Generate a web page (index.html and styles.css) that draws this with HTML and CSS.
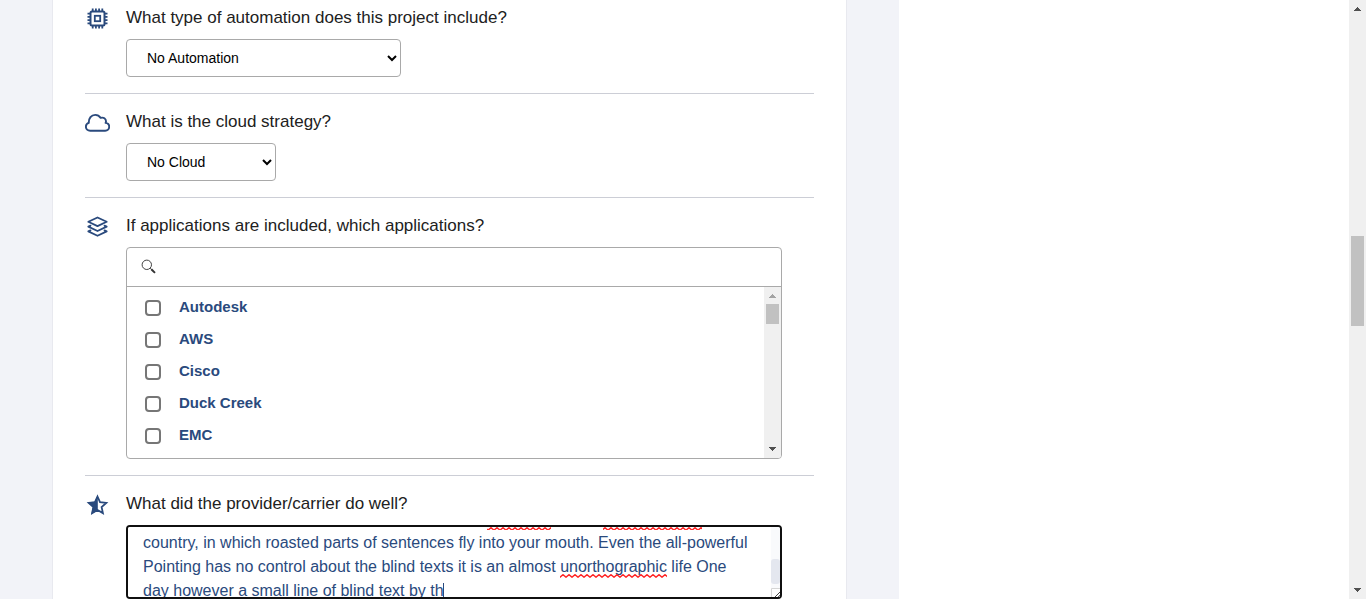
FILE: index.html
```html
<!DOCTYPE html>
<html lang="en">
<head>
<meta charset="utf-8">
<meta name="viewport" content="width=device-width, initial-scale=1">
<title>Project review</title>
<link rel="stylesheet" href="styles.css">
</head>
<body>
<main class="page">
  <div class="panel">
    <form class="card">
      <section class="question question-first">
        <svg class="icon" viewBox="0 0 25 24" aria-hidden="true">
          <g fill="none" stroke="currentColor" stroke-width="2">
            <rect x="5.500" y="5.500" width="14" height="14" rx="1.500"/>
            <rect x="9.800" y="9.800" width="5.400" height="5.400" stroke-width="1.800"/>
            <path stroke-width="1.800" d="M7.700 2.500v3M10.900 2.500v3M14.100 2.500v3M17.300 2.500v3M7.700 19.500v3M10.900 19.500v3M14.100 19.500v3M17.300 19.500v3M2.500 7.700h3M2.500 10.900h3M2.500 14.100h3M2.500 17.300h3M19.500 7.700h3M19.500 10.900h3M19.500 14.100h3M19.500 17.300h3"/>
          </g>
        </svg>
        <div class="body">
          <label class="title" for="automation">What type of automation does this project include?</label>
          <select class="select select-wide" id="automation"><option>No Automation</option></select>
        </div>
      </section>

      <section class="question">
        <svg class="icon" viewBox="0 0 25 24" aria-hidden="true">
          <path fill="none" stroke="currentColor" stroke-width="1.900" stroke-linejoin="round" d="M5.200 20.700C2.700 20.700.9 19 .9 16.700c0-1.900 1.200-3.300 2.900-3.800C3.600 8.200 6.300 4.900 10.200 4.900c2.500 0 4.300 1.200 5.500 3 2.800-1 5.400.8 5.300 3.600-.1.600-.2 1-.4 1.400 2.200.3 3.600 1.900 3.600 3.900 0 2.200-1.700 3.900-4 3.900z"/>
        </svg>
        <div class="body">
          <label class="title" for="cloud">What is the cloud strategy?</label>
          <select class="select select-narrow" id="cloud"><option>No Cloud</option></select>
        </div>
      </section>

      <section class="question">
        <svg class="icon" viewBox="0 0 25 24" aria-hidden="true">
          <g fill="none" stroke="currentColor" stroke-width="1.800" stroke-linejoin="round" stroke-linecap="round">
            <path d="M12.500 3.500l9.200 4.300-9.200 4.300-9.200-4.300z"/>
            <path d="M5.500 11.600l-2.200 1 9.200 4.400 9.200-4.400-2.200-1"/>
            <path d="M5.500 16.400l-2.200 1 9.200 4.400 9.200-4.400-2.200-1"/>
          </g>
        </svg>
        <div class="body">
          <label class="title" for="search">If applications are included, which applications?</label>
          <div class="picker">
            <div class="search">
              <svg class="glass" viewBox="0 0 16 16" aria-hidden="true">
                <circle cx="5.800" cy="5.800" r="4.700" fill="none" stroke="#444" stroke-width="1"/>
                <path d="M9.200 9.200l1.500 1.400" stroke="#444" stroke-width="1"/>
                <path d="M10.300 10.300l3.700 3.600" stroke="#333" stroke-width="2"/>
              </svg>
              <input class="search-input" id="search" type="text">
            </div>
            <div class="list">
              <div class="options">
                <label class="option"><input class="check" type="checkbox">Autodesk</label>
                <label class="option"><input class="check" type="checkbox">AWS</label>
                <label class="option"><input class="check" type="checkbox">Cisco</label>
                <label class="option"><input class="check" type="checkbox">Duck Creek</label>
                <label class="option"><input class="check" type="checkbox">EMC</label>
              </div>
              <div class="bar" aria-hidden="true">
                <svg class="arrow arrow-off" viewBox="0 0 17 17"><path d="M5 11h7v-1h-1V9h-1V8H9V7H8v1H7v1H6v1H5z"/></svg>
                <div class="track"><div class="thumb thumb-list"></div></div>
                <svg class="arrow" viewBox="0 0 17 17"><path d="M5 6h7v1h-1v1h-1v1H9v1H8V9H7V8H6V7H5z"/></svg>
              </div>
            </div>
          </div>
        </div>
      </section>

      <section class="question question-last">
        <svg class="icon" viewBox="0 0 25 24" aria-hidden="true">
          <path fill="none" stroke="currentColor" stroke-width="1.800" stroke-linejoin="miter" d="M12.500 4.500l2.500 5.600 6.300.7-4.700 4.200 1.300 6.100-5.400-3.100-5.400 3.100 1.300-6.100-4.700-4.200 6.300-.7z"/>
          <path fill="currentColor" d="M12.800 3v15.500l-6.400 3.500 1.400-6.900-5-4.600 6.700-.8z"/>
        </svg>
        <div class="body">
          <label class="title" for="review">What did the provider/carrier do well?</label>
          <div class="editor">
            <textarea class="text" id="review" rows="3" spellcheck="false">country, in which roasted parts of sentences fly into your mouth. Even the all-powerful Pointing has no control about the blind texts it is an almost unorthographic life One day however a small line of blind text by th</textarea>
            <svg class="marks" aria-hidden="true">
              <defs>
                <pattern id="wave" width="6" height="4" patternUnits="userSpaceOnUse">
                  <path d="M-1 4L0 3.200 3 .7 6 3.200 7 4" fill="none" stroke="#f22" stroke-width="1.400"/>
                </pattern>
              </defs>
              <rect x="359" width="64" height="3" fill="url(#wave)"/>
              <rect x="475" width="99" height="3" fill="url(#wave)"/>
              <g transform="translate(432 47)"><rect width="107" height="4" fill="url(#wave)"/></g>
              <rect x="315" y="56" width="1" height="16" fill="#2a4a7d"/>
            </svg>
            <div class="side" aria-hidden="true">
              <div class="side-track"><div class="side-thumb"></div></div>
              <svg class="grip" viewBox="0 0 9 9"><path d="M.5 9V.5H9" fill="none" stroke="#d5d5d5"/><path d="M4 9l5-5M7 9l2-2" stroke="#444" fill="none"/></svg>
            </div>
          </div>
        </div>
      </section>
    </form>
  </div>
  <aside class="aside"></aside>
</main>
<div class="bar" aria-hidden="true">
  <svg class="arrow" viewBox="0 0 17 17"><path d="M5 11h7v-1h-1V9h-1V8H9V7H8v1H7v1H6v1H5z"/></svg>
  <div class="track track-page"><div class="thumb thumb-page"></div></div>
  <svg class="arrow" viewBox="0 0 17 17"><path d="M5 6h7v1h-1v1h-1v1H9v1H8V9H7V8H6V7H5z"/></svg>
</div>
</body>
</html>
```
FILE: styles.css
```css
* { box-sizing: border-box; }

body {
  margin: 0;
  height: 100vh;
  display: flex;
  overflow: hidden;
  background: #fff;
  color: #212121;
  font-family: "Liberation Sans", Arial, sans-serif;
  font-size: 16px;
}

.page {
  flex: 1;
  min-width: 0;
  display: grid;
  grid-template-columns: minmax(0, 2fr) minmax(0, 1fr);
}
.panel { padding: 0 52px; background: #f2f3f8; }
.aside { background: #fff; }

.card {
  min-height: 100%;
  padding: 0 32px;
  background: #fff;
  border: solid #e8e9ef;
  border-width: 0 1px;
}

.question {
  display: flex;
  gap: 16px;
  padding: 16px 0;
  border-bottom: 1px solid #ccced6;
}
.question-first { padding-top: 6px; }
.question-last { border-bottom: 0; }

.icon { flex: none; width: 25px; height: 24px; color: #2a4a7d; }
.body {
  flex: 1;
  min-width: 0;
  padding-right: 32px;
  display: flex;
  flex-direction: column;
  align-items: flex-start;
  gap: 9px;
}
.title { font-size: 17px; line-height: 24px; }

.select {
  height: 38px;
  padding: 0 1px 0 16px;
  border: 1px solid #a9a9a9;
  border-radius: 4px;
  background: #fff;
  color: #000;
  font-family: inherit;
  font-size: 14px;
}
.select-wide { width: 275px; }
.select-narrow { width: 150px; }

.picker {
  width: 100%;
  border: 1px solid #a9a9a9;
  border-radius: 4px;
  overflow: hidden;
}
.search {
  display: flex;
  align-items: center;
  gap: 8px;
  height: 39px;
  padding: 0 14px;
  border-bottom: 1px solid #a9a9a9;
}
.glass { width: 16px; height: 16px; }
.search-input {
  flex: 1;
  height: 32px;
  padding: 0;
  border: 0;
  outline: 0;
  font-family: inherit;
  font-size: 14px;
}
.list { display: flex; height: 171px; }
.options { flex: 1; padding: 3px 18px; overflow: hidden; }
.option {
  display: flex;
  align-items: center;
  gap: 18px;
  height: 32px;
  color: #2a4a7d;
  font-size: 15px;
  font-weight: bold;
}
.check {
  appearance: none;
  width: 16px;
  height: 16px;
  margin: 4px 0 0;
  border: 2px solid #767676;
  border-radius: 4px;
  background: #fff;
}

.bar {
  flex: none;
  width: 17px;
  display: flex;
  flex-direction: column;
  background: #f0f0f0;
}
.arrow { flex: none; width: 17px; height: 17px; fill: #505050; shape-rendering: crispEdges; }
.arrow-off { fill: #a3a3a3; }
.track { flex: 1; padding: 0 2px; }
.track-page { padding-top: 219px; }
.thumb { background: #c1c1c1; }
.thumb-list { height: 20px; }
.thumb-page { height: 90px; }

.editor {
  position: relative;
  width: 100%;
  display: flex;
  height: 74px;
  border: 2px solid #101010;
  border-radius: 4px;
  overflow: hidden;
}
.text {
  flex: 1;
  min-width: 0;
  padding: 4px 15px 0;
  border: 0;
  outline: 0;
  resize: none;
  overflow: hidden;
  background: #fff;
  color: #2a4a7d;
  font-family: inherit;
  font-size: 16px;
  line-height: 24px;
}
.marks {
  position: absolute;
  inset: 0;
  width: 100%;
  height: 100%;
  pointer-events: none;
}
.side { flex: none; width: 9px; display: flex; flex-direction: column; background: #f9fafc; }
.side-track { flex: 1; padding-top: 32px; }
.side-thumb { height: 25px; border-radius: 3px; background: #e4e7ef; }
.grip { width: 9px; height: 9px; background: #fff; }
```
